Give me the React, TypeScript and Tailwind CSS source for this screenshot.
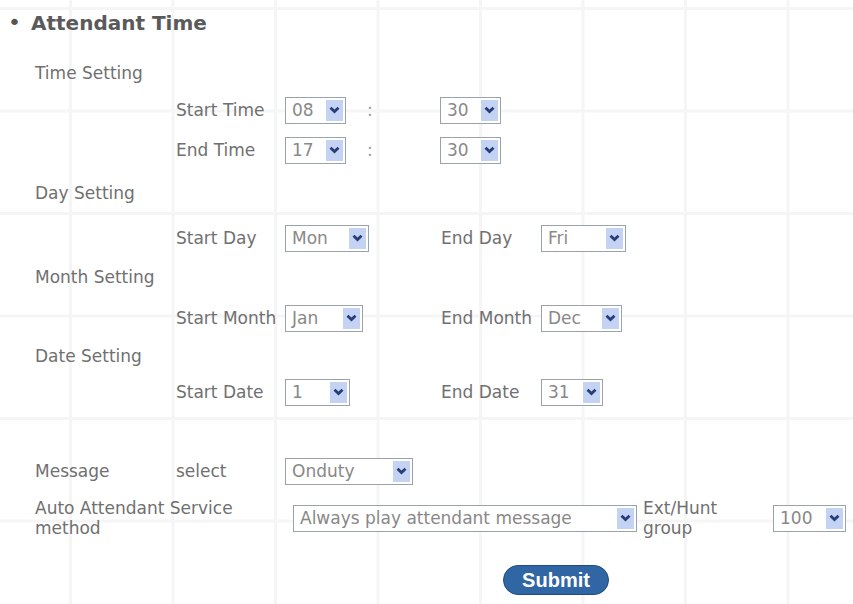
import React from 'react';

const FakeSelect = ({ value, className = '' }: { value: string; className?: string }) => {
  return (
    <div className={`relative flex h-[27px] items-center border border-[#9aa2ab] bg-white pl-[6px] text-[#888] ${className}`}>
      <span className="leading-none">{value}</span>
      <div className="absolute top-[2px] right-[2px] bottom-[2px] flex w-[17px] items-center justify-center bg-[#c4d2f4]">
        <svg width="11" height="8" viewBox="0 0 11 8">
          <polyline points="1.5,1.8 5.5,5.6 9.5,1.8" fill="none" stroke="#283d78" strokeWidth="2.8" />
        </svg>
      </div>
    </div>
  );
};

const Label = ({ children, className = '' }: { children?: React.ReactNode; className?: string }) => (
  <div className={`shrink-0 text-[#707070] ${className}`}>{children}</div>
);

const App = () => {
  return (
    <div className="h-[604px] w-[853px] overflow-hidden bg-white bg-[linear-gradient(to_right,#f5f5f5_3px,transparent_3px),linear-gradient(to_bottom,#f5f5f5_3px,transparent_3px)] bg-[length:102.5px_102.5px] bg-[position:69px_7px] font-['DejaVu_Sans',Verdana,sans-serif] text-[17px] leading-[20px]">
      {/* Heading */}
      <div className="mt-[8px] flex h-[30px] items-center pl-[8px]">
        <span className="mr-[10px] text-[22px] text-[#555]">•</span>
        <h1 className="text-[20px] font-bold text-[#5a5a5a]">Attendant Time</h1>
      </div>

      <div className="pl-[35px]">
        {/* Time setting */}
        <div className="mt-[25px] flex h-[20px] items-center">
          <Label>Time Setting</Label>
        </div>
        <div className="mt-[13px] flex h-[28px] items-center">
          <Label className="w-[141px]" />
          <Label className="w-[109px]">Start Time</Label>
          <div className="flex w-[155px] items-center">
            <FakeSelect value="08" className="w-[61px]" />
            <span className="ml-[21px] text-[#999]">:</span>
          </div>
          <FakeSelect value="30" className="w-[61px]" />
        </div>
        <div className="mt-[12px] flex h-[28px] items-center">
          <Label className="w-[141px]" />
          <Label className="w-[109px]">End Time</Label>
          <div className="flex w-[155px] items-center">
            <FakeSelect value="17" className="w-[61px]" />
            <span className="ml-[21px] text-[#999]">:</span>
          </div>
          <FakeSelect value="30" className="w-[61px]" />
        </div>

        {/* Day setting */}
        <div className="mt-[19px] flex h-[20px] items-center">
          <Label>Day Setting</Label>
        </div>
        <div className="mt-[21px] flex h-[28px] items-center">
          <Label className="w-[141px]" />
          <Label className="w-[109px]">Start Day</Label>
          <div className="w-[156px]">
            <FakeSelect value="Mon" className="w-[84px]" />
          </div>
          <Label className="w-[100px]">End Day</Label>
          <FakeSelect value="Fri" className="w-[85px]" />
        </div>

        {/* Month setting */}
        <div className="mt-[15px] flex h-[20px] items-center">
          <Label>Month Setting</Label>
        </div>
        <div className="mt-[17px] flex h-[28px] items-center">
          <Label className="w-[141px]" />
          <Label className="w-[109px]">Start Month</Label>
          <div className="w-[156px]">
            <FakeSelect value="Jan" className="w-[78px]" />
          </div>
          <Label className="w-[100px]">End Month</Label>
          <FakeSelect value="Dec" className="w-[81px]" />
        </div>

        {/* Date setting */}
        <div className="mt-[14px] flex h-[20px] items-center">
          <Label>Date Setting</Label>
        </div>
        <div className="mt-[12px] flex h-[28px] items-center">
          <Label className="w-[141px]" />
          <Label className="w-[109px]">Start Date</Label>
          <div className="w-[156px]">
            <FakeSelect value="1" className="w-[65px]" />
          </div>
          <Label className="w-[100px]">End Date</Label>
          <FakeSelect value="31" className="w-[62px]" />
        </div>

        {/* Message */}
        <div className="mt-[51px] flex h-[28px] items-center">
          <Label className="w-[141px]">Message</Label>
          <Label className="w-[109px]">select</Label>
          <FakeSelect value="Onduty" className="w-[128px]" />
        </div>

        {/* Service method */}
        <div className="mt-[13px] flex h-[40px] items-center">
          <Label className="w-[258px]">
            Auto Attendant Service
            <br />
            method
          </Label>
          <FakeSelect value="Always play attendant message" className="w-[344px]" />
          <Label className="ml-[6px] w-[130px]">
            Ext/Hunt
            <br />
            group
          </Label>
          <FakeSelect value="100" className="w-[73px]" />
        </div>
      </div>

      {/* Submit */}
      <div className="mt-[27px] flex h-[30px] pl-[503px]">
        <button className="flex h-[30px] w-[106px] items-center justify-center rounded-full border border-[#1f4c80] bg-[#2f66a3] font-['Liberation_Sans',Arial,sans-serif] text-[20px] font-bold text-white">
          Submit
        </button>
      </div>
    </div>
  );
};

export default App;
